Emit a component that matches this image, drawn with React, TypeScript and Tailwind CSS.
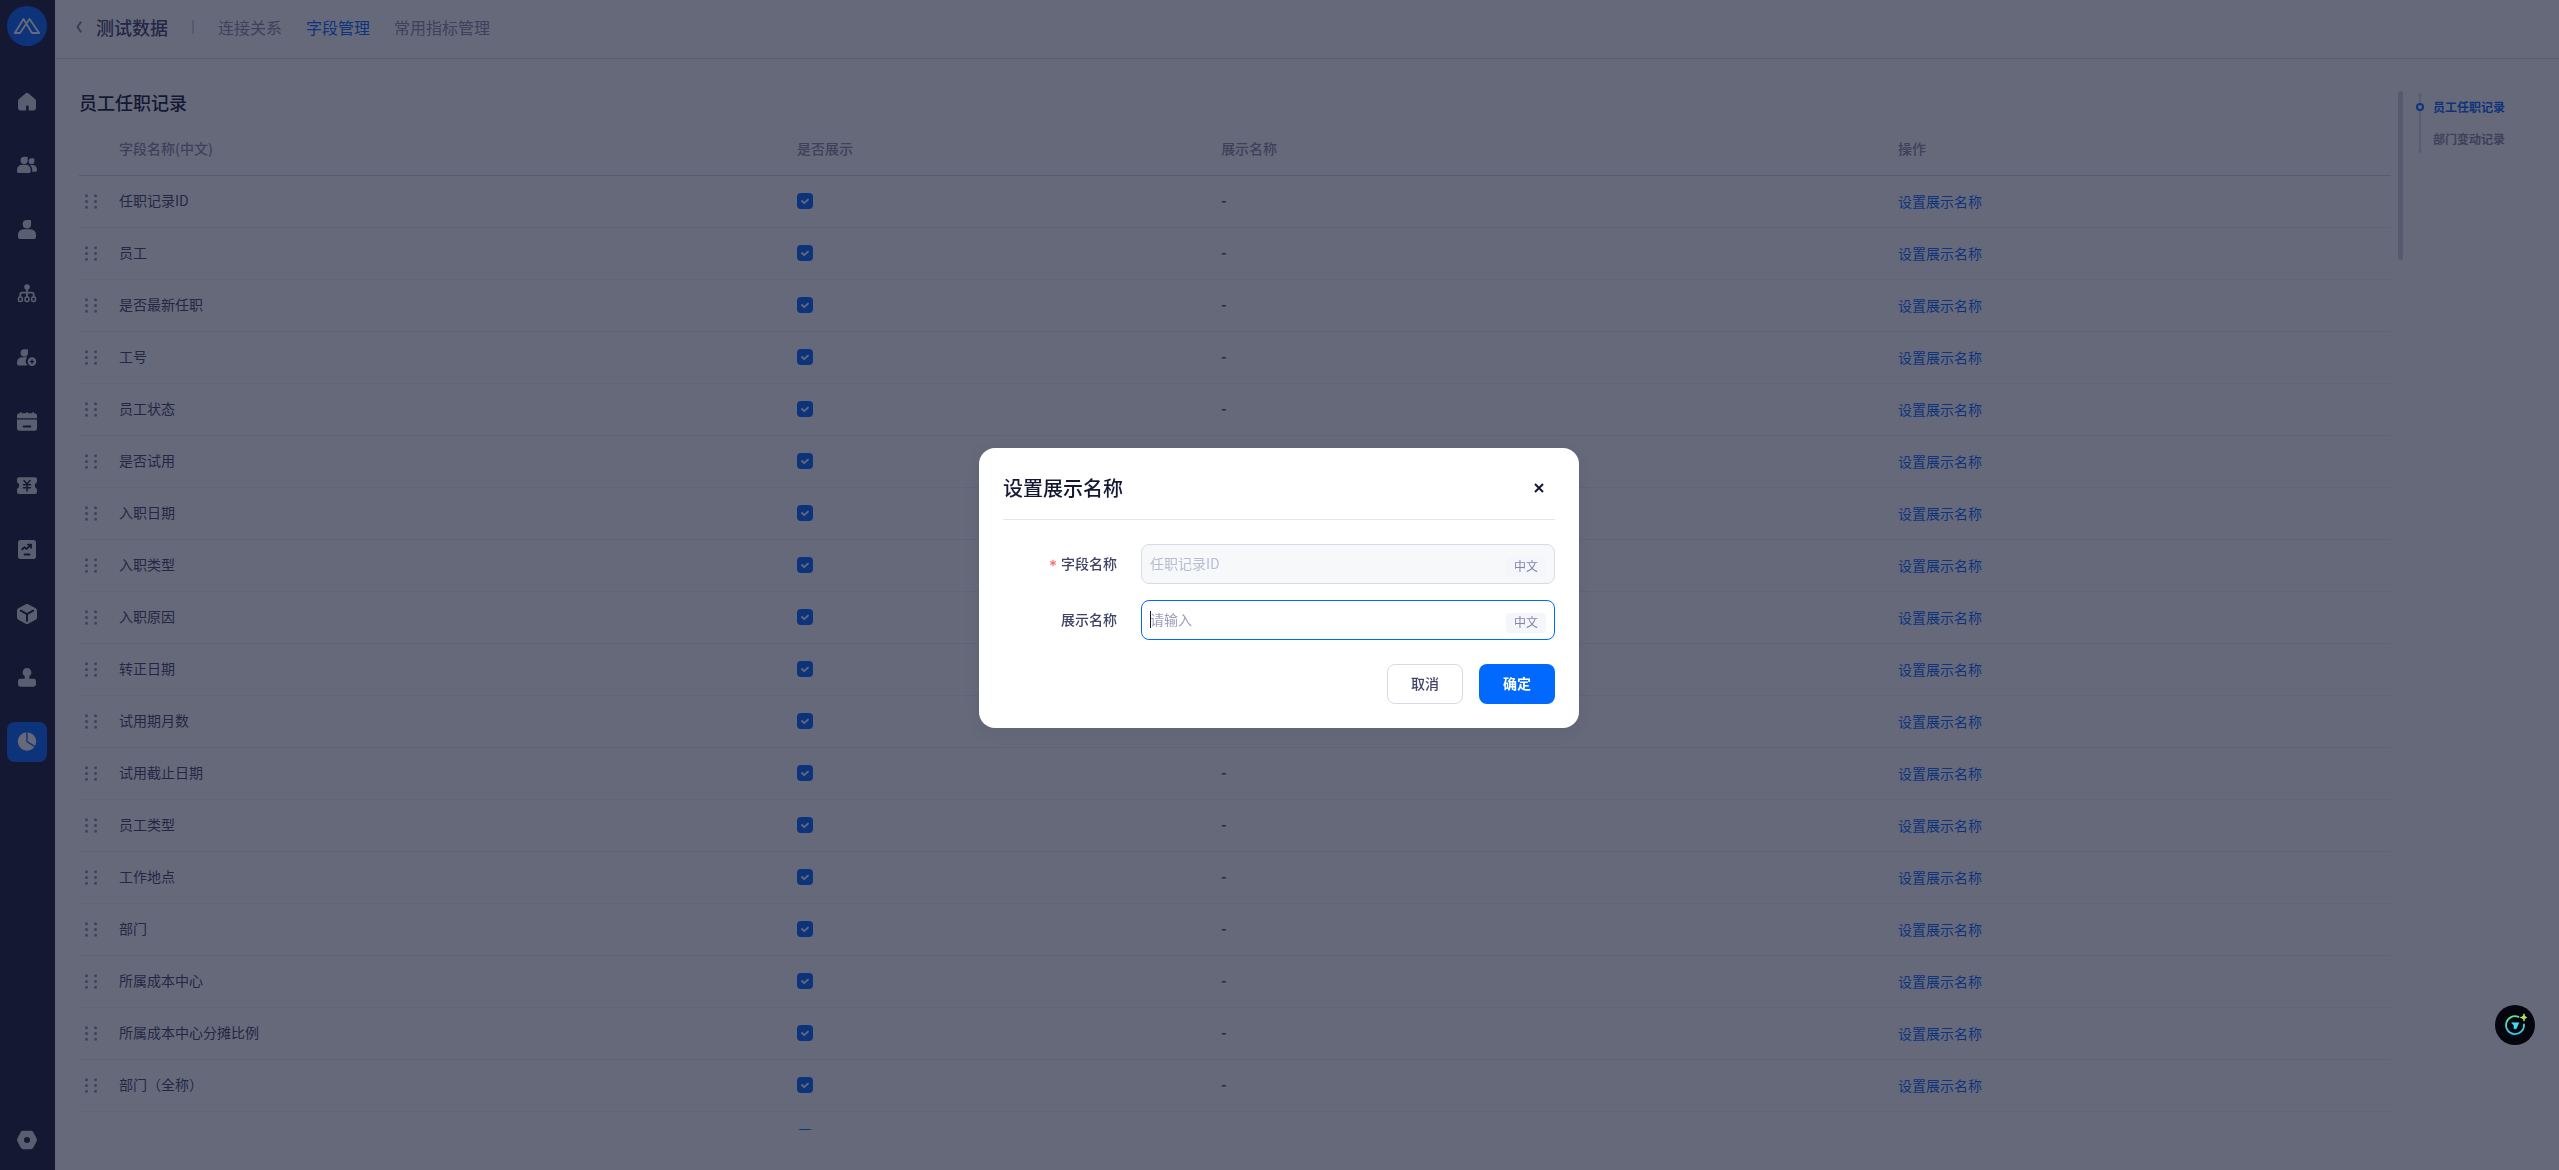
import type { ReactNode } from 'react';

const FIELDS = [
    '任职记录ID',
    '员工',
    '是否最新任职',
    '工号',
    '员工状态',
    '是否试用',
    '入职日期',
    '入职类型',
    '入职原因',
    '转正日期',
    '试用期月数',
    '试用截止日期',
    '员工类型',
    '工作地点',
    '部门',
    '所属成本中心',
    '所属成本中心分摊比例',
    '部门（全称）',
];

const TABS = ['连接关系', '字段管理', '常用指标管理'];

function Icon({ children }: { children: ReactNode }) {
    return (
        <svg viewBox="0 0 20 20" className="w-5 h-5" fill="currentColor" aria-hidden="true">
            {children}
        </svg>
    );
}

const NAV_ITEMS: { label: string; icon: ReactNode }[] = [
    {
        label: '首页',
        icon: (
            <path d="M8.4 1.5a2.4 2.4 0 0 1 3.2 0l6.4 5.4a2.8 2.8 0 0 1 1 2.1v7a2.4 2.4 0 0 1-2.4 2.4h-4.9V15a1.3 1.7 0 0 0-2.6 0v3.4H3.4A2.4 2.4 0 0 1 1 16V9c0-.8.4-1.6 1-2.1z" />
        ),
    },
    {
        label: '组织人员',
        icon: (
            <>
                <path d="M7.2.7h2.5a1 1 0 0 1 1 1v2.7a3.6 3.6 0 1 1-3.5-3.7z" />
                <path d="M5.2 8.8h3.6a4.9 4.9 0 0 1 4.9 4.9v1.5a1.9 1.9 0 0 1-1.9 1.9H1.9A1.9 1.9 0 0 1 0 15.2v-1.5a5 5 0 0 1 5.2-4.9z" />
                <path d="M14.5 2.3h2a.9.9 0 0 1 .9.9v2a2.9 2.9 0 1 1-2.9-2.9z" />
                <path d="M12.7 9h3a4.3 4.3 0 0 1 4.3 4.3v1a1.5 1.5 0 0 1-1.5 1.5h-3.3v-2.5A5.6 5.6 0 0 0 12.7 9z" />
            </>
        ),
    },
    {
        label: '员工',
        icon: (
            <>
                <path d="M10 0h3a1.1 1.1 0 0 1 1.1 1.1v3.3A4.2 4.2 0 1 1 10 0z" />
                <path d="M6.5 9.2h7a5.5 5.5 0 0 1 5.5 5.5V17a2 2 0 0 1-2 2H3a2 2 0 0 1-2-2v-2.3a5.5 5.5 0 0 1 5.5-5.5z" />
            </>
        ),
    },
    {
        label: '架构',
        icon: (
            <>
                <circle cx="10" cy="3" r="2.8" />
                <path d="M10 4v9M3.3 13v-2.5a1.8 1.8 0 0 1 1.8-1.8h9.8a1.8 1.8 0 0 1 1.8 1.8V13" fill="none" stroke="currentColor" strokeWidth="1.8" />
                <g fill="none" stroke="currentColor" strokeWidth="1.6">
                    <rect x="1.5" y="13" width="3.8" height="4.5" rx="1.5" />
                    <rect x="8.1" y="13" width="3.8" height="4.5" rx="1.5" />
                    <rect x="14.7" y="13" width="3.8" height="4.5" rx="1.5" />
                </g>
            </>
        ),
    },
    {
        label: '人事',
        icon: (
            <>
                <path d="M7.5 1.3H10a1 1 0 0 1 1 1V5a3.7 3.7 0 1 1-3.5-3.7z" />
                <path d="M5.3 9.2h4.9a6.3 6.3 0 0 0 .3 8.2H1.9A1.9 1.9 0 0 1 0 15.5v-1.2a5.1 5.1 0 0 1 5.3-5.1z" />
                <path fillRule="evenodd" d="M15 9.3a4.3 4.3 0 1 1 0 8.6 4.3 4.3 0 0 1 0-8.600zm-.7 2.2v1.400h-1.400v1.400h1.400v1.400h1.400v-1.400h1.400v-1.400h-1.400v-1.400z" />
            </>
        ),
    },
    {
        label: '假勤',
        icon: (
            <>
                <path d="M2.5 1.3h.6V.8a.8.8 0 0 1 1.6 0v.5h4.5V.8a.8.8 0 0 1 1.6 0v.5h4.5V.8a.8.8 0 0 1 1.6 0v.5h.6A2.5 2.5 0 0 1 20 3.8v2.4H0V3.8a2.5 2.5 0 0 1 2.5-2.5z" />
                <path fillRule="evenodd" d="M0 7.5h20v8.7a2.5 2.5 0 0 1-2.5 2.5h-15A2.5 2.5 0 0 1 0 16.2zm6.7 6.1a1 1 0 0 0 0 2h6.6a1 1 0 0 0 0-2z" />
            </>
        ),
    },
    {
        label: '薪酬',
        icon: (
            <>
                <path d="M2 1.2h16a2 2 0 0 1 2 2v3c-1.5.9-2.2 2-2.2 3.4s.7 2.5 2.2 3.4v3a2 2 0 0 1-2 2H2a2 2 0 0 1-2-2v-3c1.5-.9 2.2-2 2.2-3.4S1.5 7.1 0 6.2v-3a2 2 0 0 1 2-2z" />
                <path d="M7 4.5l3 3.500 3-3.500M10 8v7M6.500 8.800h7M6.500 11.800h7" fill="none" stroke="#141933" strokeWidth="1.5" strokeLinecap="round" />
            </>
        ),
    },
    {
        label: '绩效',
        icon: (
            <>
                <rect x="1" y="0" width="18" height="19" rx="2.5" />
                <path d="M5.2 9.3l2.300-2 2.200 1.600 3.800-3.800M10.800 4.600h3.300v3.200M7.500 14.500h5" fill="none" stroke="#141933" strokeWidth="1.8" strokeLinecap="round" strokeLinejoin="round" />
            </>
        ),
    },
    {
        label: '应用',
        icon: (
            <>
                <path d="M8.800.3a2.500 2.500 0 0 1 2.400 0l7.500 4A2.500 2.500 0 0 1 20 6.500v7a2.500 2.500 0 0 1-1.300 2.200l-7.500 4a2.500 2.500 0 0 1-2.400 0l-7.500-4A2.500 2.500 0 0 1 0 13.500v-7a2.500 2.500 0 0 1 1.300-2.200z" />
                <path d="M3.800 6.700L10 10.200l6.200-3.500M10 10.200v6.500" fill="none" stroke="#141933" strokeWidth="2" strokeLinecap="round" />
            </>
        ),
    },
    {
        label: '审批',
        icon: (
            <path d="M10 0a4.400 4.400 0 0 1 2.300 8.100v2.700h4.300A2.400 2.400 0 0 1 19 13.200v3.100a2.400 2.400 0 0 1-2.400 2.400H3.400A2.400 2.400 0 0 1 1 16.300v-3.100a2.400 2.400 0 0 1 2.400-2.400h4.300V8.100A4.400 4.400 0 0 1 10 0z" />
        ),
    },
    {
        label: '报表',
        icon: (
            <>
                <circle cx="10" cy="9.5" r="9.2" />
                <path d="M10 0v9.5l8 5.2" fill="none" stroke="#0269ff" strokeWidth="1.4" />
            </>
        ),
    },
];

function Sidebar() {
    return (
        <aside className="w-[55px] shrink-0 bg-[#141933] flex flex-col items-start pl-[7px] pt-1.5 pb-2.5 text-[#dcdfe4]">
            <div className="w-10 h-10 rounded-full bg-[#0269ff] flex items-center justify-center mb-9">
                <svg viewBox="0 0 28 18" className="w-7 h-[18px]" fill="none" stroke="white" strokeWidth="1.8" strokeLinejoin="round" strokeLinecap="round" aria-hidden="true">
                    <path d="M7 16H1.800L10.500 2l8.500 14h7.200L16.500 2z" />
                </svg>
            </div>
            <nav className="flex flex-col gap-6">
                {NAV_ITEMS.map((item) => (
                    <button
                        key={item.label}
                        type="button"
                        aria-label={item.label}
                        className={
                            item.label === '报表'
                                ? 'w-10 h-10 rounded-lg bg-[#0269ff] text-white flex items-center justify-center'
                                : 'w-10 h-10 rounded-lg flex items-center justify-center'
                        }
                    >
                        <Icon>{item.icon}</Icon>
                    </button>
                ))}
            </nav>
            <button type="button" aria-label="设置" className="w-10 h-10 mt-auto flex items-center justify-center">
                <Icon>
                    <path fillRule="evenodd" d="M6.300.7h7.400a3 3 0 0 1 2.500 1.400l3.300 6.200a3.500 3.500 0 0 1 0 3.200l-3.300 6.200a3 3 0 0 1-2.500 1.500H6.300a3 3 0 0 1-2.500-1.500L.5 11.500a3.500 3.500 0 0 1 0-3.200l3.300-6.200A3 3 0 0 1 6.300.7zM10 7a3 3 0 1 0 0 6 3 3 0 0 0 0-6z" />
                </Icon>
            </button>
        </aside>
    );
}

function ShowCheckbox({ label }: { label: string }) {
    return (
        <span className="grid w-4 h-4">
            <input
                type="checkbox"
                defaultChecked
                aria-label={label}
                className="col-start-1 row-start-1 appearance-none w-4 h-4 rounded bg-[#0269ff]"
            />
            <svg viewBox="0 0 16 16" className="col-start-1 row-start-1 w-4 h-4 pointer-events-none" fill="none" stroke="white" strokeWidth="1.8" aria-hidden="true">
                <path d="M4.500 7.500l2.700 2.600 4.300-4" />
            </svg>
        </span>
    );
}

function FieldRow({ name }: { name: string }) {
    return (
        <tr className="h-[52px] border-b border-[#eeeff5]">
            <td className="pl-1.5">
                <svg viewBox="0 0 13 15" className="w-[13px] h-[15px] text-[#8b90ad]" fill="currentColor" aria-hidden="true">
                    <circle cx="1.5" cy="1.8" r="1.5" />
                    <circle cx="1.5" cy="7.5" r="1.5" />
                    <circle cx="1.5" cy="13.2" r="1.5" />
                    <circle cx="10.5" cy="1.8" r="1.5" />
                    <circle cx="10.5" cy="7.5" r="1.5" />
                    <circle cx="10.5" cy="13.2" r="1.5" />
                </svg>
            </td>
            <td className="pb-0.5">{name}</td>
            <td>
                <ShowCheckbox label={name} />
            </td>
            <td className="pb-0.5 font-bold">-</td>
            <td>
                <button type="button" className="block text-[#0269ff]">
                    设置展示名称
                </button>
            </td>
        </tr>
    );
}

function AnchorNav() {
    return (
        <nav className="relative w-[156px] shrink-0 mt-0.5 pl-[30px] text-xs font-bold">
            <span className="absolute left-4 top-1 w-0.5 h-[57px] bg-[#dadce8]" />
            <span className="absolute left-[15px] top-0.5 w-1 h-1 rounded-full bg-[#dadce8]" />
            <span className="absolute left-[15px] top-[58px] w-1 h-1 rounded-full bg-[#dadce8]" />
            <span className="absolute left-[13px] top-3 w-2 h-2 rounded-full border-2 border-[#0269ff] bg-white" />
            <a href="#records" className="block leading-8 text-[#0269ff]">
                员工任职记录
            </a>
            <a href="#changes" className="block leading-8 text-[#8c8ca8]">
                部门变动记录
            </a>
        </nav>
    );
}

function LanguageTag() {
    return (
        <span className="absolute right-[9px] bottom-[7px] w-10 h-5 rounded bg-[#f5f6fc] text-xs leading-[18px] text-center text-[#8186a6]">
            中文
        </span>
    );
}

function DisplayNameDialog() {
    return (
        <div className="fixed inset-0 bg-[#141933]/65 flex items-center justify-center pt-1.5 pr-px">
            <div
                role="dialog"
                aria-labelledby="dialog-title"
                className="w-[600px] bg-white rounded-2xl p-6 shadow-[0_4px_16px_rgba(20,25,51,0.08)] text-[#3f4466]"
            >
                <div className="flex items-center justify-between pb-[15px] border-b border-[#e4e5f0]">
                    <h2 id="dialog-title" className="text-xl leading-8 font-medium text-[#141933]">
                        设置展示名称
                    </h2>
                    <button type="button" aria-label="关闭" className="w-8 h-8 flex items-center justify-center text-[#141933]">
                        <svg viewBox="0 0 10 10" className="w-2.5 h-2.5" fill="none" stroke="currentColor" strokeWidth="2" aria-hidden="true">
                            <path d="M1 1l8 8M9 1L1 9" />
                        </svg>
                    </button>
                </div>

                <form className="mt-6 text-sm">
                    <div className="flex items-center gap-6 mb-4">
                        <label htmlFor="field-name" className="w-[114px] pb-0.5 flex items-center justify-end gap-1 font-medium">
                            <svg viewBox="0 0 8 8" className="w-2 h-2" fill="none" stroke="#ff6b6b" strokeWidth="1.2" aria-hidden="true">
                                <path d="M4 .8v6.400M1.200 2.400l5.600 3.200M6.800 2.400L1.200 5.600" />
                            </svg>
                            字段名称
                        </label>
                        <div className="relative flex-1">
                            <input
                                id="field-name"
                                disabled
                                defaultValue="任职记录ID"
                                className="block w-full h-10 pl-2 pr-14 pb-0.5 rounded-lg border border-[#d8d9e6] bg-[#f7f8fa] text-[#b9bcd2]"
                            />
                            <LanguageTag />
                        </div>
                    </div>
                    <div className="flex items-center gap-6">
                        <label htmlFor="display-name" className="w-[114px] pb-0.5 text-right font-medium">
                            展示名称
                        </label>
                        <div className="relative flex-1">
                            <input
                                id="display-name"
                                placeholder="请输入"
                                className="block w-full h-10 pl-2 pr-14 pb-0.5 rounded-lg border border-[#0269ff] outline-none caret-transparent placeholder:text-[#9a9ebb]"
                            />
                            <span className="absolute left-[9px] top-[11px] w-px h-[17px] bg-[#141933]" />
                            <LanguageTag />
                        </div>
                    </div>
                    <div className="flex justify-end gap-4 mt-6">
                        <button type="button" className="w-[76px] h-10 pb-0.5 rounded-lg border border-[#d8d9e6] font-medium">
                            取消
                        </button>
                        <button type="button" className="w-[76px] h-10 pb-0.5 rounded-lg bg-[#0269ff] text-white font-bold">
                            确定
                        </button>
                    </div>
                </form>
            </div>
        </div>
    );
}

function AssistantButton() {
    return (
        <button
            type="button"
            aria-label="智能助手"
            className="fixed right-6 bottom-[125px] w-10 h-10 rounded-full bg-[#05060d] flex items-center justify-center"
        >
            <svg viewBox="0 0 24 24" className="w-6 h-6" fill="none" aria-hidden="true">
                <defs>
                    <linearGradient id="ring" x1="0" y1="0" x2="0" y2="1">
                        <stop offset="0" stopColor="#5be38c" />
                        <stop offset="1" stopColor="#35c4f5" />
                    </linearGradient>
                    <linearGradient id="spark" x1="0" y1="0" x2="1" y2="1">
                        <stop offset="0" stopColor="#f2e84a" />
                        <stop offset="1" stopColor="#6be36b" />
                    </linearGradient>
                </defs>
                <path d="M15.500 3.800A9 9 0 1 0 21 11.300" stroke="url(#ring)" strokeWidth="1.8" strokeLinecap="round" />
                <path d="M8.600 9.800h7.300l-2.700 6h-2.200v-3.300z" fill="#3fdcf0" stroke="#3fdcf0" strokeWidth=".6" strokeLinejoin="round" />
                <path d="M21 .8c.5 2.500 1.200 3.200 3 3.700-1.800.5-2.500 1.200-3 3.700-.5-2.500-1.500-3.200-3.700-3.700 2.200-.5 3.200-1.200 3.700-3.700z" fill="url(#spark)" stroke="url(#spark)" strokeWidth=".8" />
            </svg>
        </button>
    );
}

export default function App() {
    return (
        <div className="h-screen flex overflow-hidden bg-white text-sm text-[#3f4466] font-['Noto_Sans_CJK_SC',sans-serif]">
            <Sidebar />

            <div className="flex-1 min-w-0 flex flex-col">
                <header className="h-[59px] shrink-0 flex items-center border-b border-[#dcdeea] pl-[21px] pb-1">
                    <button type="button" aria-label="返回" className="w-5 text-[#81859f]">
                        <svg viewBox="0 0 6 12" className="w-1.5 h-3" fill="none" stroke="currentColor" strokeWidth="2" strokeLinejoin="round" aria-hidden="true">
                            <path d="M5.200.6L1.500 6l3.700 5.400" />
                        </svg>
                    </button>
                    <h1 className="text-lg font-medium">测试数据</h1>
                    <span className="w-0.5 h-3.5 mx-6 bg-[#d0d2e0]" />
                    <nav className="flex gap-6 text-base">
                        {TABS.map((tab) => (
                            <a key={tab} href="#" className={tab === '字段管理' ? 'text-[#0269ff]' : 'text-[#8c8ca8]'}>
                                {tab}
                            </a>
                        ))}
                    </nav>
                </header>

                <main className="flex-1 min-h-0 flex pt-[30px] pb-10 pl-6">
                    <section id="records" className="flex-1 min-w-0 overflow-hidden">
                        <h2 className="text-lg leading-[26px] font-medium text-[#141933]">员工任职记录</h2>
                        <table className="w-full mt-2 table-fixed border-collapse text-left">
                            <colgroup>
                                <col className="w-10" />
                                <col className="w-[29.33%]" />
                                <col className="w-[18.34%]" />
                                <col className="w-[29.28%]" />
                                <col />
                            </colgroup>
                            <thead>
                                <tr className="h-[52px] border-b border-[#d5d7e8] text-[#8c8ca8]">
                                    <th />
                                    <th className="pb-0.5 font-medium">字段名称(中文)</th>
                                    <th className="pb-0.5 font-medium">是否展示</th>
                                    <th className="pb-0.5 font-medium">展示名称</th>
                                    <th className="pb-0.5 font-medium">操作</th>
                                </tr>
                            </thead>
                            <tbody>
                                {FIELDS.map((name) => (
                                    <FieldRow key={name} name={name} />
                                ))}
                                {/* start of the next row, below the fold */}
                                <tr className="h-[52px]">
                                    <td colSpan={2} />
                                    <td>
                                        <ShowCheckbox label="是否展示" />
                                    </td>
                                    <td colSpan={2} />
                                </tr>
                            </tbody>
                        </table>
                    </section>
                    <div className="w-[5px] h-[169px] mt-0.5 ml-[7px] shrink-0 rounded-full bg-[#d2d4e0]" />
                    <AnchorNav />
                </main>
            </div>

            <DisplayNameDialog />
            <AssistantButton />
        </div>
    );
}
